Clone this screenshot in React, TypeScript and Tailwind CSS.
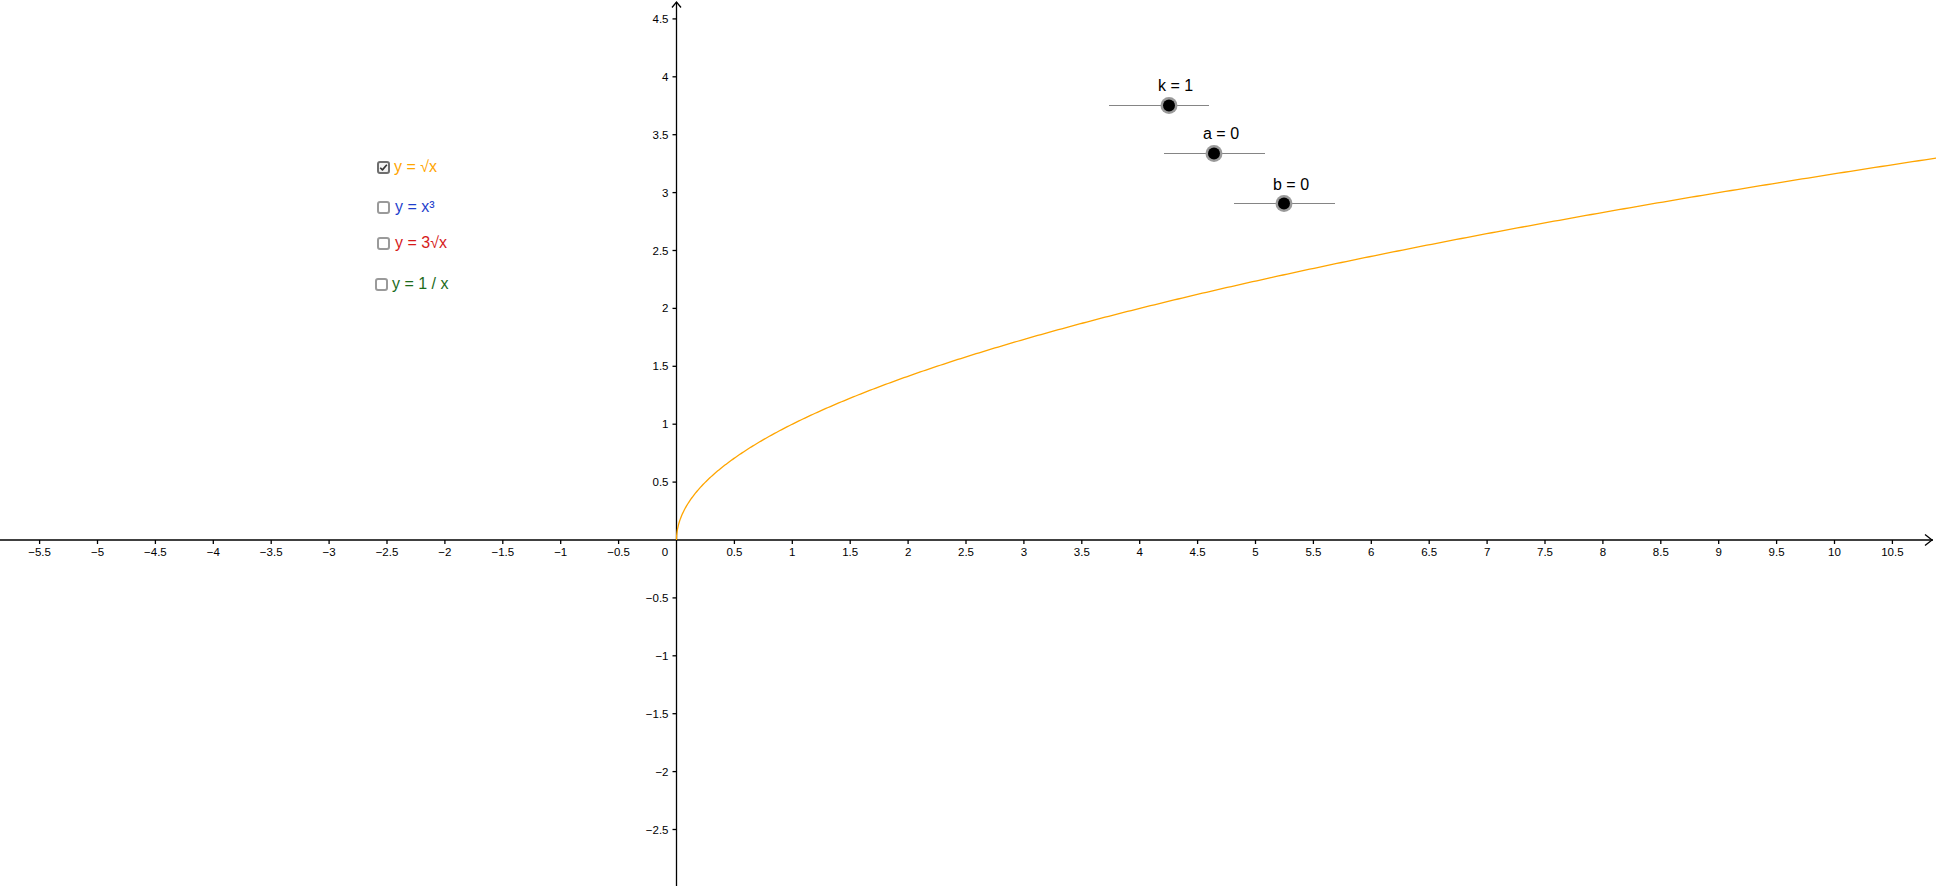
import React from "react";

const U = 115.8;
const OX = 676.5;
const OY = 540;

const px = (x: number) => OX + x * U;
const py = (y: number) => OY - y * U;

const fmt = (v: number) => (v < 0 ? "\u2212" + Math.abs(v) : String(v));

const xTicks: number[] = [];
for (let i = -11; i <= 21; i++) if (i !== 0) xTicks.push(i / 2);
const yTicks: number[] = [];
for (let i = -5; i <= 9; i++) if (i !== 0) yTicks.push(i / 2);

function sqrtPath() {
  const pts: string[] = [];
  const N = 400;
  for (let i = 0; i <= N; i++) {
    const x = Math.pow(i / N, 2) * 11;
    pts.push(`${px(x).toFixed(2)},${py(Math.sqrt(x)).toFixed(2)}`);
  }
  return "M" + pts.join(" L");
}

type Slider = { name: string; value: number; x1: number; x2: number; y: number; knob: number; labelX: number; labelY: number };

const sliders: Slider[] = [
  { name: "k", value: 1, x1: 1109, x2: 1209, y: 105.5, knob: 1169, labelX: 1158, labelY: 91 },
  { name: "a", value: 0, x1: 1164, x2: 1265, y: 153.5, knob: 1214, labelX: 1203, labelY: 138.5 },
  { name: "b", value: 0, x1: 1234, x2: 1335, y: 203.5, knob: 1284, labelX: 1273, labelY: 189.5 },
];

function Graph() {
  return (
    <svg width={1936} height={886} viewBox="0 0 1936 886" className="block">
      {/* axes */}
      <g stroke="#000" strokeWidth={1.3} fill="none">
        <line x1={0} y1={OY} x2={1933} y2={OY} />
        <polyline points={`1925,534.5 1932,${OY} 1925,545.5`} />
        <line x1={OX} y1={2} x2={OX} y2={886} />
        <polyline points={`${OX - 4.5},7.5 ${OX},2 ${OX + 4.5},7.5`} />
        {xTicks.map((t) => (
          <line key={"xt" + t} x1={px(t)} y1={OY} x2={px(t)} y2={OY + 4} />
        ))}
        {yTicks.map((t) => (
          <line key={"yt" + t} x1={OX - 4} y1={py(t)} x2={OX} y2={py(t)} />
        ))}
      </g>
      <g fontSize={11.5} fill="#000">
        {xTicks.map((t) => (
          <text key={"xl" + t} x={px(t)} y={OY + 16} textAnchor="middle">
            {fmt(t)}
          </text>
        ))}
        {yTicks.map((t) => (
          <text key={"yl" + t} x={OX - 8} y={py(t) + 4} textAnchor="end">
            {fmt(t)}
          </text>
        ))}
        <text x={665} y={OY + 16} textAnchor="middle">
          0
        </text>
      </g>

      {/* y = sqrt(x) */}
      <path d={sqrtPath()} stroke="#ffa500" strokeWidth={1.3} fill="none" />

      {/* sliders */}
      {sliders.map((s) => (
        <g key={s.name}>
          <line x1={s.x1} y1={s.y} x2={s.x2} y2={s.y} stroke="#858585" strokeWidth={1} />
          <circle cx={s.knob} cy={s.y} r={8.5} fill="#9a9a9a" />
          <circle cx={s.knob} cy={s.y} r={6} fill="#000" />
          <text x={s.labelX} y={s.labelY} fontSize={16} fill="#000">
            {s.name} = {s.value}
          </text>
        </g>
      ))}
    </svg>
  );
}

function Box({ checked }: { checked?: boolean }) {
  return (
    <span
      className={
        checked
          ? "w-[13px] h-[13px] rounded-[3px] border-2 border-[#6e6e6e] bg-[#f2f2f2] flex items-center justify-center"
          : "w-[13px] h-[13px] rounded-[3px] border-2 border-[#9a9a9a] bg-white"
      }
    >
      {checked && (
        <svg width="11" height="11" viewBox="0 0 11 11">
          <path d="M1.5 5.8 L4.2 8.4 L9.6 2.2" stroke="#333" strokeWidth={2} fill="none" strokeLinejoin="round" />
        </svg>
      )}
    </span>
  );
}

export default function App() {
  return (
    <div className="relative w-[1936px] h-[886px] bg-white overflow-hidden font-['Liberation_Sans',Arial,sans-serif]">
      <Graph />

      <label className="absolute left-[377px] top-[157px] h-[20px] flex items-center gap-[4px] text-[16px] text-[#ffa500]">
        <Box checked />
        <span>y = √x</span>
      </label>
      <label className="absolute left-[377px] top-[197px] h-[20px] flex items-center gap-[5px] text-[16px] text-[#1f3fcc]">
        <Box />
        <span>y = x³</span>
      </label>
      <label className="absolute left-[377px] top-[233px] h-[20px] flex items-center gap-[5px] text-[16px] text-[#d61a1a]">
        <Box />
        <span>y = 3√x</span>
      </label>
      <label className="absolute left-[375px] top-[274px] h-[20px] flex items-center gap-[4px] text-[16px] text-[#1c6b1c]">
        <Box />
        <span>y = 1 / x</span>
      </label>
    </div>
  );
}
